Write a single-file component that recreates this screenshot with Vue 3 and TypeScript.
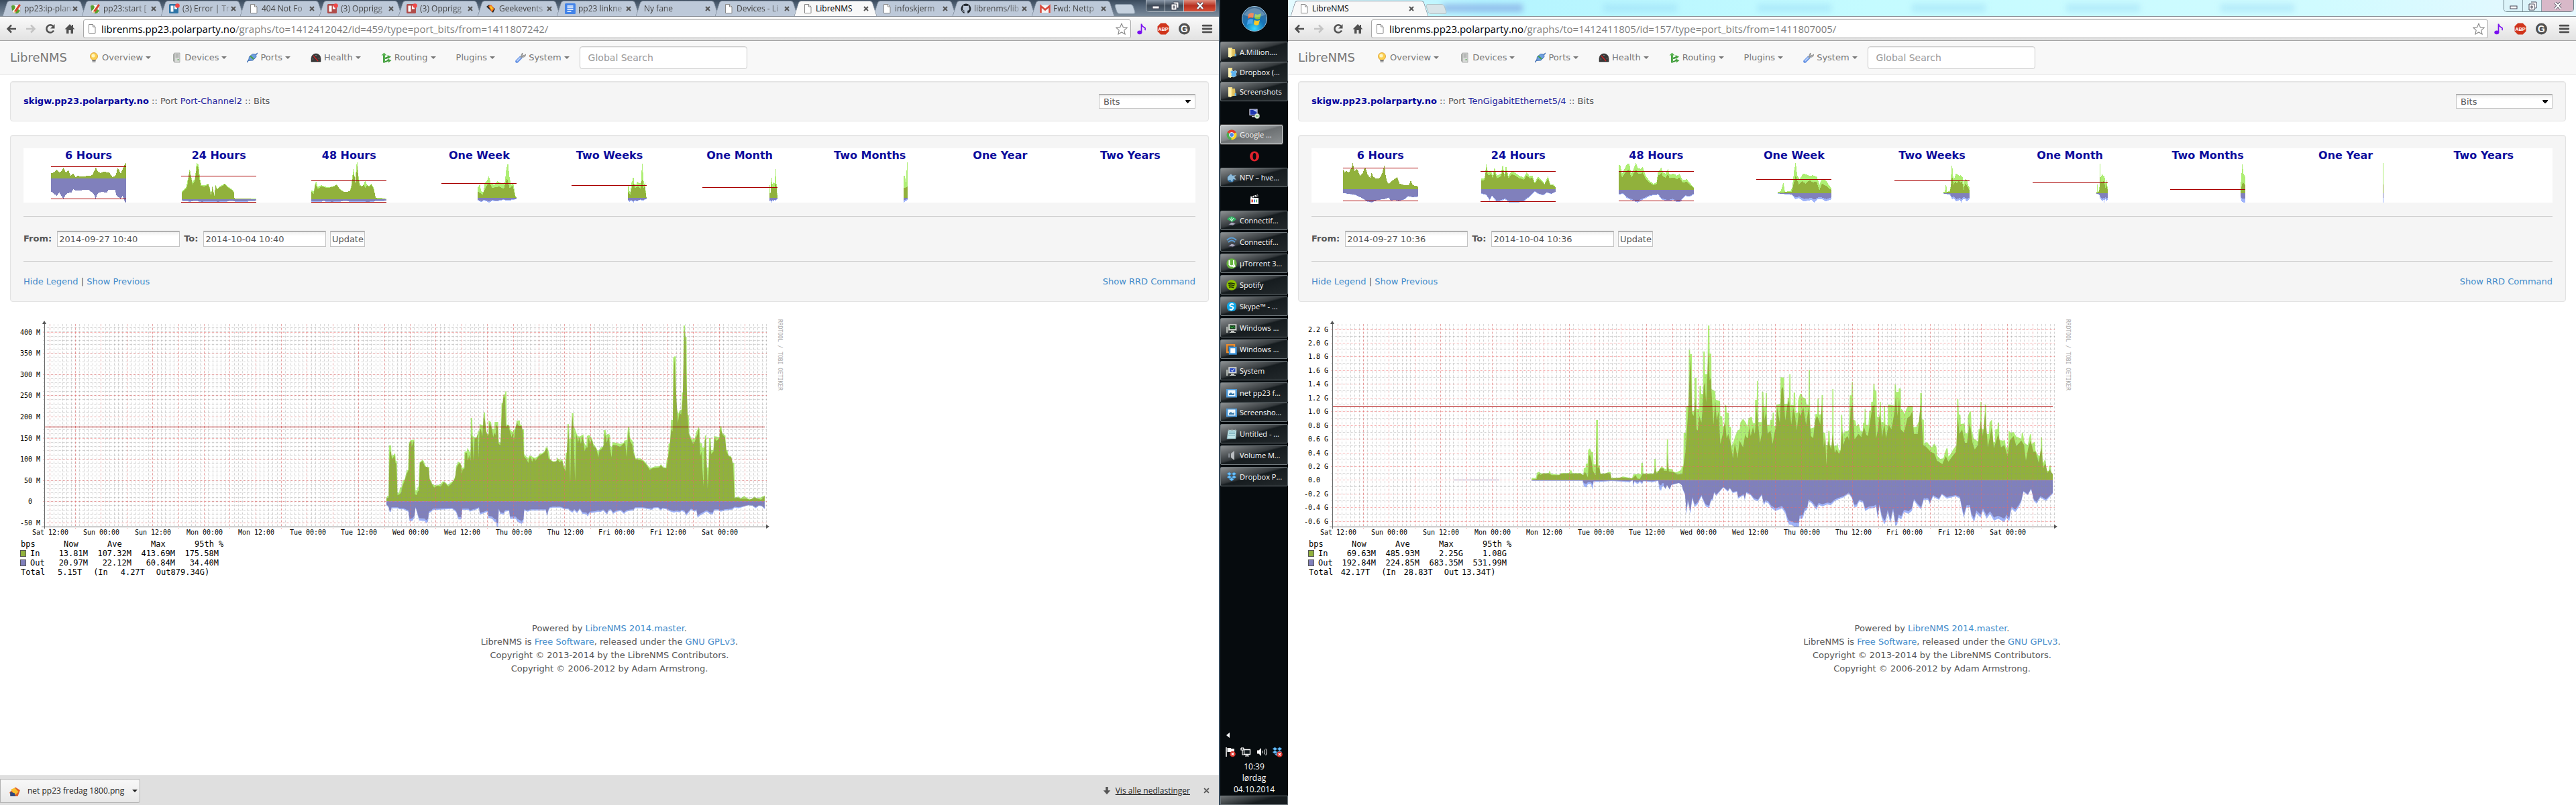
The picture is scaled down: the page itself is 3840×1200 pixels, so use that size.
<script setup lang="ts">
type Pt = number[]
interface Thumb { title: string; zero: number; lines: number[]; peak: string; avg: string; out: string; outPeak: string }
interface Trace { x: number; width: number; viewBox: string; peak: string; avg: string; out: string; outAvg: string }
interface Tick { y: number; label: string; lx: number }
interface Tab { title: string; icon: string; active?: boolean }
interface Page {
  id: string; tabs: Tab[]; glass: boolean; host: string; path: string; port: string
  from: string; to: string; thumbs: Thumb[]; traces: Trace[]; ticks: Tick[]; minor: number[]; percentile: number
  rows: { name: string; cls: string; cells: string[] }[]; total: string; totalIn: string; totalOut: string; downloads: boolean
}

const parse = (s: string): Pt[] => s.trim().split(/\s+/).map(p => p.split(',').map(Number))
const join = (pts: Pt[]): string => pts.map(p => p.join(',')).join(' ')

/* Closes a curve against the zero line. */
function area(src: string, zero: number): string {
  const pts = parse(src)
  return join([[pts[0][0], zero], ...pts, [pts[pts.length - 1][0], zero]])
}
/* Pulls a curve towards the zero line by a factor. */
function damp(src: string, zero: number, k: number): string {
  return join(parse(src).map(([x, y]) => [x, Math.round(zero + (y - zero) * k)]))
}
/* Packs a one-week curve into the last `span` units of a longer period. */
function squeeze(src: string, start: number, span: number): string {
  return join(parse(src).map(([x, y]) => [Math.round((183 - span + (x - start) * span / (183 - start)) * 10) / 10, y]))
}
function thumb(title: string, zero: number, lines: number[], peak: string, avg: string, out: string, k = 0.7): Thumb {
  if (!peak) return { title, zero, lines, peak: '', avg: '', out: '', outPeak: '' }
  return { title, zero, lines, peak: area(peak, zero), avg: area(avg, zero), outPeak: area(out, zero), out: area(damp(out, zero, k), zero) }
}

const aWeekPeak = '88,112 94,100 97,130 102,135 106,90 110,85 116,60 120,95 130,100 136,85 144,92 154,95 158,30 162,0 166,70 170,100 175,90 180,150 183,158'
const aWeekAvg = '88,130 100,145 106,120 112,100 118,95 124,115 140,108 152,118 160,70 166,115 174,105 180,155 183,158'
const aWeekOut = '88,170 98,178 104,170 116,180 124,172 135,175 150,168 165,172 183,164'
const a6 = '0,50 10,42 14,32 20,45 26,38 30,24 36,45 42,34 48,60 54,50 60,66 66,60 74,64 100,58 106,38 109,22 114,42 120,48 128,42 142,46 150,66 158,58 162,26 166,34 170,52 176,22 183,0'
const a6out = '0,130 14,150 20,135 30,162 38,140 50,134 54,120 60,125 92,124 104,140 109,163 114,138 124,132 136,136 140,122 156,124 160,150 170,162 174,150 180,176 183,180'
const aThumbs: Thumb[] = [
  thumb('6 Hours', 72, [19, 163], a6, a6, a6out, 1),
  thumb('24 Hours', 166, [61, 178],
    '2,130 12,112 17,70 21,28 24,60 28,90 34,70 37,10 39,2 43,14 46,75 50,102 60,102 66,95 70,115 73,145 76,108 81,145 84,102 88,118 96,106 106,94 112,106 122,118 128,128 130,162 183,162',
    '2,135 12,118 16,95 20,40 23,60 28,100 34,80 38,20 41,18 44,70 48,105 58,108 66,98 70,120 73,150 76,112 81,150 84,105 88,122 96,108 102,106 106,96 112,110 122,122 128,130 130,162 183,164',
    '2,172 20,176 40,174 50,180 70,176 90,180 120,174 150,178 183,172'),
  thumb('48 Hours', 166, [82, 178],
    '0,125 6,130 10,90 12,86 16,110 24,102 40,112 56,106 62,98 70,120 80,132 94,130 98,100 102,30 105,50 107,90 110,10 112,0 115,60 118,100 124,106 128,98 132,78 136,104 140,106 146,96 152,112 157,158 183,162',
    '0,130 6,140 10,98 16,120 24,108 40,115 56,108 62,100 70,122 80,132 94,130 98,110 102,55 105,60 107,90 112,18 115,75 118,105 124,108 128,100 132,115 136,100 140,110 146,98 152,120 157,160 183,164',
    '0,176 20,178 30,174 50,180 80,174 110,178 140,180 150,176 183,172'),
  thumb('One Week', 160, [94], aWeekPeak, aWeekAvg, aWeekOut),
  thumb('Two Weeks', 160, [103], squeeze(aWeekPeak, 88, 46), squeeze(aWeekAvg, 88, 46), squeeze(aWeekOut, 88, 46)),
  thumb('One Month', 160, [112], squeeze(aWeekPeak, 88, 20), squeeze(aWeekAvg, 88, 20), squeeze(aWeekOut, 88, 20)),
  thumb('Two Months', 160, [], '174,60 177,60 178,95 180,80 181,0 183,0', '174,114 180,112 183,105', '174,180 178,174 183,168', 0.5),
  thumb('One Year', 160, [], '', '', ''),
  thumb('Two Years', 160, [], '', '', '')
]

const bWeekPeak = '52,132 60,130 66,90 70,132 84,128 88,110 92,40 96,0 100,60 106,75 114,50 124,55 130,60 138,58 148,65 154,100 160,75 170,80 176,100 183,115'
const bWeekAvg = '52,135 86,132 92,90 96,60 104,100 112,85 120,95 130,80 138,90 146,85 154,125 160,95 170,105 183,125'
const bWeekOut = '52,140 86,145 96,165 104,160 116,175 124,172 134,168 142,180 150,165 160,165 170,175 183,165'
const b6 = '0,30 4,45 8,38 14,45 20,28 24,2 28,40 34,30 42,60 48,50 54,18 60,55 66,70 70,45 74,65 80,72 90,70 96,45 101,12 104,60 108,90 112,95 120,82 132,66 138,95 150,103 160,102 165,82 170,102 183,108'
const b24 = '2,72 10,70 14,6 18,45 26,40 30,60 34,22 40,60 50,50 54,8 58,50 62,15 68,60 76,38 84,45 94,60 106,68 112,45 120,62 126,58 132,90 140,64 150,80 156,95 164,62 170,98 178,100 183,112'
const b48 = '0,10 4,15 8,50 14,30 20,8 26,5 30,50 36,30 42,2 46,25 54,30 58,20 66,60 74,80 84,96 92,90 96,40 104,25 108,45 114,50 120,30 124,55 134,50 142,60 148,50 156,80 166,75 172,90 183,112'
const bThumbs: Thumb[] = [
  thumb('6 Hours', 120, [25, 172], b6, b6, '0,138 16,142 30,146 44,158 60,176 70,180 80,170 100,165 112,158 116,172 124,168 136,172 150,166 158,152 170,156 183,154', 0.97),
  thumb('24 Hours', 120, [40, 175], b24, damp(b24, 120, 0.82), '2,140 14,146 22,170 28,150 40,178 50,172 60,165 70,180 104,178 112,165 122,150 132,130 140,140 152,148 162,135 172,142 183,132', 0.92),
  thumb('48 Hours', 123, [40, 172], b48, damp(b48, 123, 0.76), '0,145 10,140 20,160 40,176 46,180 60,165 76,150 96,145 104,165 120,175 132,168 142,178 150,176 162,150 172,155 183,142', 0.88),
  thumb('One Week', 138, [76], bWeekPeak, bWeekAvg, bWeekOut),
  thumb('Two Weeks', 138, [82], squeeze(bWeekPeak, 52, 64), squeeze(bWeekAvg, 52, 64), squeeze(bWeekOut, 52, 64)),
  thumb('One Month', 138, [91], squeeze(bWeekPeak, 52, 28), squeeze(bWeekAvg, 52, 28), squeeze(bWeekOut, 52, 28)),
  thumb('Two Months', 138, [121], '171,120 174,50 176,0 178,45 181,60 183,65', '171,130 175,100 177,88 180,95 183,105', '171,150 174,175 180,180 183,178', 0.6),
  thumb('One Year', 138, [], '181,2 183,2', '181,100 183,100', '181,180 183,180', 0.5),
  thumb('Two Years', 138, [], '', '', '')
]

const aPeak = '64,845 67,838 72,838 73,612 81,612 82,657 90,655 92,648 96,650 98,682 102,682 104,822 110,824 113,800 120,798 123,768 130,766 134,745 138,724 143,722 146,600 152,588 166,586 168,740 170,813 176,812 178,798 181,796 185,688 192,680 195,675 200,682 206,700 208,708 219,708 220,760 226,768 230,783 240,790 250,790 262,784 270,772 280,778 288,788 296,780 308,770 316,748 318,705 326,685 334,690 340,712 347,710 349,640 357,638 360,622 367,640 371,640 372,488 377,490 379,570 386,575 396,577 397,550 403,548 404,516 411,520 417,522 419,465 424,465 425,525 430,560 436,560 437,500 446,508 449,536 458,538 459,507 472,507 474,598 482,600 484,424 490,422 491,384 497,384 498,370 502,370 503,519 512,520 516,540 524,552 532,540 538,520 539,500 551,500 552,518 558,520 560,540 566,541 567,650 575,662 582,668 586,657 594,660 600,665 606,668 618,660 624,648 632,648 642,636 646,620 652,620 658,645 662,675 674,684 684,682 688,665 694,675 706,675 712,705 716,710 719,645 724,644 725,516 730,517 732,582 740,582 741,468 747,468 748,525 756,550 762,570 770,572 783,562 786,600 794,615 796,570 804,565 812,575 820,605 828,618 836,638 842,630 846,620 856,618 858,543 865,544 867,565 876,560 880,565 882,615 888,618 890,598 904,600 918,605 930,600 932,590 942,588 946,530 951,530 954,580 962,590 966,600 968,640 974,670 992,670 1004,680 1012,690 1024,710 1032,712 1044,706 1062,705 1066,695 1074,708 1084,712 1088,668 1092,665 1094,605 1100,600 1103,498 1110,498 1111,219 1116,214 1121,214 1122,440 1130,470 1134,455 1142,452 1143,376 1148,374 1149,76 1154,76 1155,126 1160,126 1162,474 1168,476 1170,560 1180,585 1190,580 1196,550 1204,530 1208,540 1209,600 1216,602 1218,622 1226,620 1227,568 1232,568 1233,710 1240,710 1242,578 1248,580 1250,632 1258,632 1260,570 1270,572 1280,575 1282,526 1287,526 1290,555 1302,568 1303,632 1310,634 1312,656 1322,660 1326,688 1334,690 1337,845 1350,840 1356,850 1370,838 1384,850 1398,852 1408,840 1414,848 1428,846 1434,842 1445,836'
const aAvg = '64,848 72,845 74,710 76,640 80,640 84,672 88,668 93,655 97,690 100,690 104,835 112,830 118,822 122,795 130,770 138,740 145,720 147,605 155,592 156,618 164,590 168,830 174,835 179,815 183,815 186,690 196,682 204,706 218,712 222,765 232,788 238,800 250,792 262,796 274,775 290,796 302,782 314,760 320,712 330,690 336,700 339,742 342,720 349,715 352,645 358,645 361,680 366,655 371,680 374,560 378,580 382,680 386,580 392,580 397,560 400,670 404,540 409,540 414,572 419,480 424,500 428,545 433,570 438,560 440,510 444,520 450,545 454,575 458,555 462,565 466,520 470,530 474,605 480,612 486,440 492,390 497,400 500,530 508,520 514,545 521,575 525,552 529,590 534,545 540,510 547,525 556,525 562,545 566,660 576,675 582,690 588,660 596,685 602,668 608,680 620,660 640,645 650,622 656,670 670,685 684,684 690,675 696,688 706,680 712,712 718,728 722,650 728,540 731,600 735,780 739,540 743,480 746,520 753,775 757,560 764,600 768,575 774,605 780,570 784,600 788,638 792,620 798,622 802,575 808,605 814,580 820,615 830,625 838,665 842,635 850,628 858,610 862,555 868,600 876,570 880,620 886,665 890,610 904,612 918,618 930,604 936,600 941,665 948,540 954,595 962,610 966,645 974,675 1000,680 1014,700 1026,722 1034,715 1060,710 1066,700 1074,712 1086,715 1092,670 1098,620 1104,540 1109,550 1113,290 1116,220 1120,340 1128,512 1134,465 1140,475 1146,400 1150,190 1153,90 1157,150 1160,340 1164,480 1168,560 1176,585 1184,606 1190,595 1200,560 1205,535 1210,660 1214,640 1217,700 1222,795 1226,590 1230,580 1237,805 1241,720 1245,590 1250,650 1258,640 1262,580 1270,592 1280,580 1284,535 1292,565 1300,575 1306,640 1314,660 1324,665 1330,700 1335,848 1345,845 1360,850 1380,850 1390,855 1408,845 1420,850 1432,855 1445,838'
const aOut = '64,878 72,890 75,908 81,908 82,893 105,893 112,898 126,898 138,905 144,908 148,950 158,950 166,935 170,892 174,905 180,935 184,948 204,950 209,960 216,950 219,915 228,908 234,900 250,900 304,896 318,910 327,943 337,943 340,900 364,900 368,908 380,903 390,900 402,893 405,922 420,915 434,908 436,937 450,940 458,953 465,955 467,975 472,975 474,900 480,918 492,922 496,908 512,905 515,940 536,940 542,952 557,963 564,955 567,903 580,908 590,903 646,903 650,930 656,903 660,893 670,890 700,890 714,898 728,898 734,905 743,913 750,902 760,915 770,898 780,918 794,920 799,930 806,915 826,912 836,908 846,910 856,903 869,922 876,905 884,903 892,918 904,908 920,905 931,918 940,908 950,905 966,903 972,893 1000,893 1034,900 1040,893 1056,892 1066,903 1072,895 1086,898 1096,905 1114,913 1124,908 1134,912 1142,905 1152,910 1159,926 1166,915 1176,900 1190,908 1196,903 1200,935 1210,925 1218,920 1230,910 1234,908 1246,920 1256,920 1260,903 1276,903 1285,908 1300,903 1326,900 1336,890 1350,893 1364,888 1384,880 1400,882 1412,893 1424,882 1436,885 1445,898'

const bPeakEarly = '949,757 966,759 969,735 978,729 985,737 1015,735 1019,723 1024,739 1060,743 1064,736 1094,735 1102,720 1108,736 1140,736 1150,745 1152,714 1159,712 1160,693 1167,693 1169,633 1176,625 1181,640 1188,643 1190,697 1199,697 1200,498 1207,498 1209,700 1214,702 1216,738 1236,737 1250,730 1257,732 1258,757 1290,757 1304,751 1340,759 1345,741 1358,741 1364,738 1374,742 1376,689 1382,690 1384,737 1426,737 1427,672 1432,672 1434,730 1444,725 1454,706 1463,712'
const bAvgEarly = '949,764 968,762 972,745 980,738 984,745 990,738 1018,738 1026,745 1055,745 1062,738 1140,738 1150,745 1156,730 1162,740 1168,755 1172,660 1176,655 1182,680 1188,725 1193,738 1198,745 1203,540 1206,715 1211,706 1217,740 1250,735 1256,740 1260,760 1300,755 1340,760 1348,752 1354,745 1360,760 1370,762 1380,740 1424,740 1430,710 1436,738 1450,715 1463,715'
const bOutEarly = '949,770 1148,770 1152,795 1162,800 1168,785 1180,785 1186,810 1190,775 1222,775 1260,771 1310,775 1330,777 1342,768 1345,800 1349,775 1362,785 1370,775 1379,785 1384,772 1420,777 1442,770 1445,805 1453,815 1457,795 1463,795'
const bPeak = '0,715 10,718 12,585 16,585 17,717 30,718 36,730 46,732 64,722 66,706 72,706 73,555 81,555 82,440 91,436 92,183 96,183 97,204 103,204 104,460 112,455 113,309 120,309 121,450 130,450 131,345 136,345 137,382 144,382 145,192 150,192 151,294 160,294 162,76 167,76 168,201 174,201 175,360 188,370 190,407 206,414 207,480 214,482 216,528 222,526 223,432 229,434 230,465 238,466 240,528 246,530 247,615 254,600 262,568 270,545 278,540 280,510 290,492 300,510 306,528 310,490 322,484 326,514 333,512 334,408 340,408 341,323 345,323 346,508 358,508 359,371 364,373 366,440 372,440 373,378 377,378 378,520 388,520 390,497 397,497 398,465 402,465 404,525 410,525 411,430 426,426 427,306 440,309 441,426 452,425 453,400 458,398 459,294 463,294 464,432 474,432 475,376 480,376 482,465 490,465 491,411 498,382 504,382 508,397 518,402 522,430 529,430 530,274 534,274 535,537 552,530 554,472 561,472 562,402 566,402 568,474 576,472 577,387 581,387 583,555 590,555 592,609 600,610 601,547 606,547 608,612 615,612 616,360 620,360 621,615 632,612 634,598 640,635 646,632 648,474 652,475 654,560 662,550 676,545 680,388 686,388 687,330 691,330 693,497 700,500 704,525 712,515 720,550 727,548 728,510 733,510 734,448 737,448 740,520 748,520 751,458 757,455 758,418 764,416 766,337 770,337 771,366 777,366 779,484 788,484 789,417 793,417 795,508 803,508 804,435 808,435 810,520 818,520 819,429 843,434 844,339 848,339 849,373 858,372 859,357 866,357 867,448 874,455 880,472 886,450 892,437 910,437 912,530 924,528 930,508 936,508 937,378 943,378 944,495 950,497 952,603 962,596 970,610 980,620 988,603 996,618 1000,660 1010,672 1022,670 1026,648 1033,625 1037,625 1040,662 1048,650 1056,632 1066,616 1070,614 1072,405 1076,405 1078,474 1084,475 1085,516 1099,514 1102,558 1110,558 1111,484 1118,460 1122,460 1125,540 1132,580 1148,595 1150,540 1156,540 1157,417 1161,417 1162,540 1172,540 1173,429 1177,429 1179,560 1188,560 1190,510 1199,496 1201,540 1204,598 1210,598 1211,541 1219,540 1220,510 1225,510 1226,588 1240,590 1246,588 1250,620 1258,620 1260,546 1268,555 1278,552 1288,572 1306,582 1308,556 1312,556 1318,600 1326,608 1330,609 1338,562 1342,562 1344,605 1356,595 1358,634 1366,655 1376,660 1378,576 1382,576 1384,692 1394,672 1398,725 1406,726 1408,702 1414,702 1416,735 1421,738'
const bAvg = '0,725 12,725 15,640 19,728 35,730 50,742 68,740 75,680 80,640 84,560 90,450 95,290 99,220 104,470 110,480 116,400 120,540 125,545 130,480 138,510 143,440 146,350 150,330 155,420 159,330 163,190 168,320 172,310 178,440 182,520 188,410 194,500 200,460 207,605 216,560 224,500 230,580 236,560 244,600 253,670 260,600 270,670 277,590 290,620 298,560 302,575 308,580 312,530 318,570 326,530 333,560 340,440 345,520 352,600 358,560 362,430 368,500 374,460 380,560 390,545 398,605 404,560 410,530 414,440 424,510 430,360 436,350 444,500 452,430 458,410 466,520 473,440 480,480 486,545 494,460 500,480 510,440 520,520 530,440 538,570 546,580 553,500 560,480 568,500 572,520 578,430 585,620 590,560 594,700 600,590 612,630 617,560 625,645 632,630 640,650 646,635 652,540 656,610 664,580 672,570 677,590 683,450 690,430 697,585 712,560 722,575 732,530 740,565 746,570 756,490 762,440 770,430 776,580 783,540 790,460 798,575 806,510 812,580 822,520 832,540 842,470 848,390 854,480 860,400 866,540 878,555 890,490 900,480 908,460 914,560 928,560 938,430 948,610 960,620 975,640 990,650 998,680 1018,695 1030,660 1040,685 1058,655 1068,640 1074,480 1080,560 1090,540 1100,600 1108,600 1118,510 1128,600 1136,630 1148,610 1158,500 1166,570 1174,460 1184,620 1198,530 1206,625 1222,560 1232,620 1244,610 1256,660 1264,590 1278,570 1288,615 1306,590 1316,610 1323,680 1332,620 1340,590 1350,640 1358,640 1370,690 1376,640 1380,620 1386,715 1394,690 1402,735 1410,720 1421,742'
const bOut = '0,795 7,808 12,790 22,810 28,790 40,785 56,780 66,790 70,810 78,833 84,922 88,860 98,918 104,850 114,887 124,875 130,860 138,840 148,870 154,885 166,892 172,862 180,855 184,825 192,838 204,820 218,800 234,818 242,805 252,825 268,820 272,850 292,835 296,857 302,825 318,835 330,855 344,862 358,835 366,880 372,865 382,870 392,890 408,905 432,893 444,915 452,950 458,965 470,968 476,975 494,975 496,940 508,938 516,905 524,900 530,860 542,872 558,900 566,878 580,884 598,876 610,880 624,862 640,852 656,845 676,828 688,850 696,887 704,887 714,862 728,868 736,905 750,895 768,892 776,885 781,938 788,885 796,935 806,965 812,950 818,910 828,960 838,905 846,970 852,970 858,935 868,942 878,910 894,918 906,905 914,858 928,882 940,898 950,855 966,855 972,875 984,840 996,850 1006,855 1016,832 1034,850 1066,840 1082,850 1088,890 1096,935 1106,890 1118,888 1124,930 1134,953 1142,915 1158,935 1166,905 1180,940 1192,918 1206,948 1222,940 1244,955 1252,935 1262,952 1270,895 1284,910 1296,890 1306,865 1314,820 1330,835 1342,808 1352,860 1362,872 1376,845 1396,860 1412,840 1421,828'

function trace(x: number, width: number, viewBox: string, zero: number, peak: string, avg: string, out: string, k: number): Trace {
  return { x, width, viewBox, peak: area(peak, zero), avg: area(avg, zero), out: area(out, zero), outAvg: area(damp(out, zero, k), zero) }
}
const steps = (from: number, to: number, step: number): number[] => {
  const list: number[] = []
  for (let v = from; v <= to; v += step) list.push(Math.round(v))
  return list
}
const aTicks: Tick[] = ['400 M', '350 M', '300 M', '250 M', '200 M', '150 M', '100 M', '50 M', '0', '-50 M']
  .map((label, i) => ({ y: Math.round(494.5 + i * 31.6), label, lx: label === '0' ? 48 : 60 }))
const bTicks: Tick[] = ['2.2 G', '2.0 G', '1.8 G', '1.6 G', '1.4 G', '1.2 G', '1.0 G', '0.8 G', '0.6 G', '0.4 G', '0.2 G', '0.0', '-0.2 G', '-0.4 G', '-0.6 G']
  .map((label, i) => ({ y: Math.round(490.5 + i * 20.45), label, lx: label === '0.0' ? 48 : 60 }))

const hours = steps(73.5, 1144, 6.4)
const sixHours = steps(73.5, 1144, 38.4)
const dates = ['Sat 12:00', 'Sun 00:00', 'Sun 12:00', 'Mon 00:00', 'Mon 12:00', 'Tue 00:00', 'Tue 12:00', 'Wed 00:00', 'Wed 12:00', 'Thu 00:00', 'Thu 12:00', 'Fri 00:00', 'Fri 12:00', 'Sat 00:00']
  .map((label, i) => ({ label, x: Math.round(74.5 + i * 76.8) }))

const pages: Page[] = [
  {
    id: 'a', glass: false, host: 'librenms.pp23.polarparty.no', path: '/graphs/to=1412412042/id=459/type=port_bits/from=1411807242/', port: 'Port-Channel2',
    tabs: [
      { title: 'pp23:ip-plan', icon: 'doku' }, { title: 'pp23:start [', icon: 'doku' }, { title: '(3) Error | Tr', icon: 'trelloBlue' }, { title: '404 Not Fo', icon: 'page' },
      { title: '(3) Opprigg', icon: 'trelloRed' }, { title: '(3) Opprigg', icon: 'trelloRed' }, { title: 'Geekevents', icon: 'geek' }, { title: 'pp23 linkne', icon: 'doc' },
      { title: 'Ny fane', icon: '' }, { title: 'Devices - Li', icon: 'page' }, { title: 'LibreNMS', icon: 'page', active: true }, { title: 'infoskjerm', icon: 'page' },
      { title: 'librenms/lib', icon: 'github' }, { title: 'Fwd: Nettp', icon: 'gmail' }
    ],
    from: '2014-09-27 10:40', to: '2014-10-04 10:40', thumbs: aThumbs,
    traces: [trace(550, 640, '0 0 1568 1260', 862, aPeak, aAvg, aOut, 0.87)],
    ticks: aTicks, minor: steps(488, 784, 6.32), percentile: 636,
    rows: [
      { name: 'In', cls: 'in', cells: ['13.81M', '107.32M', '413.69M', '175.58M'] },
      { name: 'Out', cls: 'out', cells: ['20.97M', '22.12M', '60.84M', '34.40M'] }
    ],
    total: '5.15T', totalIn: '4.27T', totalOut: '879.34G)', downloads: true
  },
  {
    id: 'b', glass: true, host: 'librenms.pp23.polarparty.no', path: '/graphs/to=1412411805/id=157/type=port_bits/from=1411807005/', port: 'TenGigabitEthernet5/4',
    tabs: [{ title: 'LibreNMS', icon: 'page', active: true }],
    from: '2014-09-27 10:36', to: '2014-10-04 10:36', thumbs: bThumbs,
    traces: [
      trace(0, 560, '0 0 1463 1260', 767, bPeakEarly, bAvgEarly, bOutEarly, 0.5),
      trace(560, 640, '0 0 1568 1260', 767, bPeak, bAvg, bOut, 0.92)
    ],
    ticks: bTicks, minor: steps(500.5, 780, 20.45), percentile: 605,
    rows: [
      { name: 'In', cls: 'in', cells: ['69.63M', '485.93M', '2.25G', '1.08G'] },
      { name: 'Out', cls: 'out', cells: ['192.84M', '224.85M', '683.35M', '531.99M'] }
    ],
    total: '42.17T', totalIn: '28.83T', totalOut: '13.34T)', downloads: false
  }
]

const menu = [
  { label: 'Overview', icon: 'bulb' }, { label: 'Devices', icon: 'server' }, { label: 'Ports', icon: 'plug' }, { label: 'Health', icon: 'gauge' },
  { label: 'Routing', icon: 'route' }, { label: 'Plugins', icon: '' }, { label: 'System', icon: 'wrench' }
]

interface Task { label?: string; icon: string; cls?: string }
const tasks: Task[] = [
  { label: 'A.Million....', icon: 'folder', cls: 'joined' }, { label: 'Dropbox (...', icon: 'folderBox', cls: 'joined' }, { label: 'Screenshots', icon: 'folder' },
  { icon: 'remote' }, { label: 'Google ...', icon: 'chrome', cls: 'current' }, { icon: 'opera' }, { label: 'NFV – hve...', icon: 'globe' }, { icon: 'clapper' },
  { label: 'Connectif...', icon: 'wifiGreen' }, { label: 'Connectif...', icon: 'wifiBlue' }, { label: 'µTorrent 3...', icon: 'utorrent' }, { label: 'Spotify', icon: 'spotify' },
  { label: 'Skype™ - ...', icon: 'skype' }, { label: 'Windows ...', icon: 'monitorGreen' }, { label: 'Windows ...', icon: 'vmware' }, { label: 'System', icon: 'monitorBlue' },
  { label: 'net pp23 f...', icon: 'photo', cls: 'joined' }, { label: 'Screensho...', icon: 'photo' }, { label: 'Untitled - ...', icon: 'notepad' },
  { label: 'Volume M...', icon: 'speaker' }, { label: 'Dropbox P...', icon: 'dropbox' }
]

const box = '<path d="M4.5 1 8 3.4 4.6 5.8 1 3.3zM11.500 1 15 3.3 11.400 5.800 8 3.400zM1 8.200 4.600 5.800 8 8.200 4.500 10.600zM15 8.200 11.400 5.800 8 8.200 11.500 10.600zM8 9.200l3.400 2.300L8 14l-3.500-2.500z" fill="#6cc0f8" stroke="#2b7fc4" stroke-width=".5"/>'
const monitor = (c: string) => `<rect x="3" y="2" width="12.500" height="9.500" fill="#d8dcd8" stroke="#777" stroke-width=".7"/><rect x="5" y="4" width="8.500" height="5.500" fill="${c}"/><path d="M7 12h5v2H7zM5 14h9v1H5z" fill="#c8ccc8"/><rect x="0" y="6" width="2.500" height="9" fill="#aeb4ae"/>`
const icons: Record<string, string> = {
  page: '<path d="M3.500 1.500h6l3.500 3.500v9.500H3.500z" fill="#fff" stroke="#888"/><path d="M9.500 1.500V5H13" fill="none" stroke="#888"/>',
  doku: '<path d="M2 2h9l3 4v8H3z" fill="#fff" stroke="#aaa" stroke-width=".6"/><path d="M1 4q4-3 6 1-1 5-5 6zM7 10q4-3 7 1-3 5-7 4z" fill="#58a030"/><path d="M5 11.500 12.500 1l2.500 1.800L8 13z" fill="#d8452f"/><path d="M5 11.500L4 14.500 8 13z" fill="#f0d090"/>',
  trelloBlue: '<rect x="0" y="1" width="14" height="14" rx="1.500" fill="#2e74a6"/><rect x="2.500" y="3.500" width="4" height="9" fill="#fff"/><rect x="8" y="3.500" width="4" height="5" fill="#fff"/><circle cx="12.500" cy="3.500" r="3.300" fill="#f04848"/>',
  trelloRed: '<rect x="0" y="1" width="14" height="14" rx="1.500" fill="#b04c4a"/><rect x="2.500" y="3.500" width="4" height="9" fill="#fff"/><rect x="8" y="3.500" width="4" height="5" fill="#fff"/><circle cx="12.500" cy="3.500" r="3.300" fill="#f04848"/>',
  geek: '<path d="M1 5l4-3 9 6-3 6z" fill="#222"/><path d="M4 4l4-2 5 6-4 5z" fill="#f07020"/><path d="M6 5l2-1 3 4-2 2z" fill="#fbd020"/>',
  doc: '<rect x="0" y="0" width="16" height="16" rx="1.500" fill="#4484e8"/><path d="M3.500 4h9M3.500 6.700h9M3.500 9.400h9M3.500 12h6" stroke="#fff" stroke-width="1.300"/>',
  github: '<path d="M8 .5a7.500 7.500 0 0 0-2.400 14.600v-2.200c-2 .4-2.600-.9-2.800-1.400-.2-.4-.6-.9-1-1.100 1-.3 1.500.4 1.900 1 .6 1 1.500.9 2 .7.100-.5.300-.9.500-1.100C4.500 10.800 3 10 3 7.400c0-.8.300-1.500.8-2-.2-.7-.2-1.400.1-2.100.8 0 1.500.4 2.100.8a7.600 7.600 0 0 1 4 0c.6-.4 1.300-.8 2.100-.8.300.700.300 1.400.1 2.100.5.500.8 1.200.8 2 0 2.600-1.500 3.400-3.200 3.600.3.300.5.800.5 1.600v2.500A7.500 7.500 0 0 0 8 .5z" fill="#20262c"/>',
  gmail: '<rect x="0" y="2.500" width="16" height="11.500" fill="#f4f4f4"/><path d="M1.500 14V4L8 9.500 14.500 4v10" fill="none" stroke="#d8483c" stroke-width="2.600"/>',
  bulb: '<circle cx="8" cy="6" r="5.500" fill="#fcd050" stroke="#d89830" stroke-width=".8"/><circle cx="7" cy="5" r="2.600" fill="#fff6c0"/><path d="M5.500 11h5v4h-5z" fill="#a8a8a8"/><path d="M5.500 12.500h5" stroke="#666"/>',
  server: '<path d="M5 1h8v14H5z" fill="#d8dad8" stroke="#999" stroke-width=".7"/><path d="M3 3l2-2v14l-2-2z" fill="#a4a8a4"/><path d="M6.500 3h5M6.500 5h5M6.500 7h5" stroke="#888" stroke-width=".8"/><circle cx="10.500" cy="11" r="1" fill="#4a4"/>',
  plug: '<path d="M0 15l3-4M13 4l3-3" stroke="#4a78b8" stroke-width="1.600"/><path d="M2.500 12.500l1-6 5-4 5 .5.500 4-5 5z" fill="#6c9fe0" stroke="#3864a8" stroke-width=".8"/><path d="M5 5.500l5 4.500" stroke="#48a048" stroke-width="2.200"/>',
  gauge: '<path d="M1 14V9a7 7 0 0 1 14 0v5z" fill="#383838" stroke="#222" stroke-width=".6"/><path d="M4 5l7 8" stroke="#d02020" stroke-width="1.300"/><path d="M3 10h1M12 9h1M8 4v1" stroke="#ccc"/>',
  route: '<path d="M4.500 15.500V4" stroke="#3c9838" stroke-width="3"/><path d="M4.500 4v11" stroke="#8cdc80" stroke-width="1"/><path d="M0.500 4.500L4.500 .5l4 4z" fill="#58b450"/><path d="M5 14q4 0 6-3M5 9q3 0 6-2" fill="none" stroke="#3c9838" stroke-width="2.200"/><path d="M9.500 4L15 6.500 10.500 10zM10 9.500l5.500 2.500-4.500 3.500z" fill="#48a440"/>',
  wrench: '<path d="M2.500 13.500l6-6" stroke="#6894e4" stroke-width="4.600" stroke-linecap="round"/><path d="M2.500 13l6-6" stroke="#b8d0fa" stroke-width="1.800"/><path d="M8 8l3-3" stroke="#999" stroke-width="2.500"/><path d="M10 6a3.200 3.200 0 0 1 1-5v3l2 .8L15.500 3A3.500 3.500 0 0 1 11 7z" fill="#bbb" stroke="#777" stroke-width=".7"/>',
  folder: '<path d="M3 1h6v14H3z" fill="#f4e08c"/><path d="M3 1l4 2v13l-4-1z" fill="#fbf0b0"/><path d="M9 3h4l1 11H9z" fill="#e0c05c"/><path d="M12.500 10h2.500v4h-2.500z" fill="#58a8e0"/>',
  folderBox: '<path d="M3 1h6v14H3z" fill="#f4e08c"/><path d="M3 1l4 2v13l-4-1z" fill="#fbf0b0"/><path d="M6 7l3-2 2 2 2-2 3 2-2 3 1 3-4 2-4-2 1-3z" fill="#5cb4f0" stroke="#cfeafe" stroke-width=".6"/>',
  remote: '<rect x="1" y="2" width="11" height="8.500" fill="#2038b0" stroke="#dde" stroke-width="1.200"/><path d="M6 3h5v3z" fill="#b8d0f8"/><path d="M4 12h6v1.500H4z" fill="#ccd"/><circle cx="12" cy="12" r="3.700" fill="#e8f4e0" stroke="#999" stroke-width=".5"/><path d="M10.200 10.500l1.500 1.500-1.500 1.500M14 10.500L12.500 12l1.500 1.500" fill="none" stroke="#289828"/>',
  chrome: '<circle cx="8" cy="8" r="7.500" fill="#4caf50"/><path d="M8 8L1.500 4.200A7.500 7.500 0 0 1 14.600 4.500z" fill="#e33b2e"/><path d="M8 8l6.600-3.500A7.500 7.500 0 0 1 7.500 15.500z" fill="#fcd320"/><circle cx="8" cy="8" r="3.500" fill="#4a86e8" stroke="#fff"/>',
  opera: '<ellipse cx="8" cy="8" rx="7" ry="7.500" fill="#e0222c"/><ellipse cx="8" cy="8" rx="2.500" ry="5" fill="#080c10"/>',
  globe: '<circle cx="7" cy="9" r="5.500" fill="#2c6ea4"/><path d="M2 7l5-5 2 3 6-1-3 3 3 4-5-1-1 5-3-4-4 1z" fill="#a8d0e8" opacity=".8"/>',
  clapper: '<path d="M2 4l11-3 .5 2.500-11 3z" fill="#fff"/><path d="M4 3.500l1.500 2M7.500 2.500L9 4.500M11 1.500l1.500 2" stroke="#222" stroke-width="1.500"/><rect x="2" y="6" width="12" height="9" fill="#fff"/><path d="M3.500 8.500h2.500v4H3.500z" fill="#e04838"/><path d="M7 8.500h2v4H7z" fill="#3c80d8"/><path d="M10.500 8.500h1.500v4h-1.500z" fill="#40a848"/>',
  wifiGreen: '<path d="M1 6q7-9 14 0l-6 4z" fill="#30b060"/><path d="M5 4l3 5M8 3v6M11 4L8 9" stroke="#d8ffe0"/><path d="M3 14l5-4 6 2-4 3z" fill="#aab" stroke="#445"/>',
  wifiBlue: '<path d="M1 5q7-7 14 0M3 8q5-5 10 0" fill="none" stroke="#5a9cd4" stroke-width="2"/><path d="M3 14l5-4 6 2-4 3z" fill="#aab" stroke="#445"/>',
  utorrent: '<circle cx="8" cy="8" r="7.700" fill="#68b440"/><path d="M4.500 3v6q1 3.500 5 2l1 1.500 2-.8-1.500-3V3M4.500 4v6" fill="none" stroke="#fff" stroke-width="2"/>',
  spotify: '<circle cx="8" cy="8" r="7.700" fill="#8cc000"/><path d="M3 5.500q5-1.500 10 1M3.500 8.200q4.500-1.200 8.500 1M4 11q4-1 7 .8" fill="none" stroke="#18240a" stroke-width="1.500"/>',
  skype: '<rect x="1" y="1" width="14" height="14" rx="6" fill="#10a8e8"/><path d="M11 5Q8 3 6 5t2 3 1.500 3.500-4.500 0" fill="none" stroke="#fff" stroke-width="1.900"/>',
  monitorGreen: monitor('#103818') + '<path d="M5 7l2-1 1.500 2L10 6l3 1" fill="none" stroke="#40e050"/>',
  monitorBlue: monitor('#2848c0') + '<path d="M7 6.500l2 2 3-4" fill="none" stroke="#fff"/>',
  vmware: '<rect x="1" y="1" width="11" height="11" fill="none" stroke="#f08c28" stroke-width="2.400"/><rect x="5" y="5" width="9.500" height="9.500" fill="#fff" stroke="#3c94dc" stroke-width="2.400"/>',
  photo: '<rect x="0" y="2" width="16" height="12.500" fill="#4c98d8"/><rect x="2.500" y="3.500" width="11" height="9" fill="#f0f8fc"/><path d="M4 11V9l3-2 2 2 3-1v3z" fill="#3878a8"/>',
  notepad: '<path d="M3 2h12l-1 13H1z" fill="#c0e4e8" stroke="#78a8b0" stroke-width=".6"/><path d="M4 5h9M4 7.500h9M3 10h10" stroke="#68a0b0" stroke-width=".8"/><path d="M3 1.500h12" stroke="#888" stroke-dasharray="1 1" stroke-width="2"/>',
  speaker: '<path d="M7 5l5-4v14l-5-4z" fill="#b8bcc0"/><path d="M3 5h3v6H3z" fill="#80868c"/>',
  dropbox: box,
  flag: '<path d="M2 1v14" stroke="#fff" stroke-width="1.500"/><path d="M3.500 2h5l1 1H14v6H9L8 8H3.500z" fill="#fff"/><circle cx="11.500" cy="11" r="4.300" fill="#d83028"/><path d="M9.800 9.300l3.400 3.400M13.200 9.300l-3.400 3.400" stroke="#fff" stroke-width="1.400"/>',
  network: '<path d="M5.500 4.500h9v7h-9z" fill="#10181c" stroke="#fff" stroke-width="1.300"/><path d="M7 14h6M10 12v2M1 2v3h4V2M2 1v2M4 1v2M3 5v7h3" fill="none" stroke="#fff" stroke-width="1.200"/>',
  volume: '<path d="M1 5.500h2.500L7 2v12l-3.500-3.500H1z" fill="#fff"/><path d="M9 6q1 2 0 4M11.500 4.500q2 3.500 0 7M13.700 3q3 5 0 10" fill="none" stroke="#ddd" stroke-width="1.100"/>',
  dropErr: box + '<circle cx="11.500" cy="11.500" r="4.300" fill="#d83028"/><path d="M9.800 9.800l3.400 3.400M13.200 9.800l-3.400 3.400" stroke="#fff" stroke-width="1.400"/>',
  back: '<path d="M15 8H3M8 2.500L2.500 8 8 13.500" fill="none" stroke="#505050" stroke-width="2.500"/>',
  forward: '<path d="M1 8h12M8 2.500L13.500 8 8 13.500" fill="none" stroke="#c4c4c4" stroke-width="2.500"/>',
  reload: '<path d="M13 10.500A5.600 5.600 0 1 1 12 4" fill="none" stroke="#505050" stroke-width="2.500"/><path d="M14.500 1v6.500H8z" fill="#505050"/>',
  home: '<path d="M8 1L0.500 8.500H3V15h3.500v-5h3v5H13V8.500h2.500L13 6V2h-2v2z" fill="#505050"/>',
  star: '<path d="M8 1l2.100 4.900 5.200.5-3.900 3.500 1.100 5.200L8 12.400l-4.500 2.700 1.100-5.200L.7 6.400l5.200-.5z" fill="#fff" stroke="#888"/>',
  note: '<ellipse cx="5.500" cy="13" rx="3.300" ry="2.700" fill="#7a10f0"/><path d="M8 13V1q1 4 5 5.500 1 1.500 0 3.500" fill="none" stroke="#7a10f0" stroke-width="1.600"/>',
  abp: '<path d="M5 0h7l4.500 4.500v7L12 16H5L.5 11.500v-7z" fill="#d0351c"/><text x="8.500" y="11" text-anchor="middle" font-family="Liberation Sans, sans-serif" font-weight="700" font-size="7" fill="#fff">ABP</text>',
  ghost: '<circle cx="8" cy="8" r="8" fill="#505050"/><text x="8" y="12.500" text-anchor="middle" font-family="Liberation Sans, sans-serif" font-weight="700" font-size="13" fill="#fff">G</text>',
  bars: '<path d="M2 3.500h12M2 8h12M2 12.500h12" stroke="#505050" stroke-width="2.600" stroke-linecap="round"/>',
  download: '<path d="M6 1h4v6h4l-6 7-6-7h4z" fill="#555"/>',
  picture: '<path d="M1 10L9 3l6 4-3 8H3z" fill="#e06028"/><path d="M3 6l5-2 5 5-5 5z" fill="#f8c030"/><path d="M2 9l6 2 1 4H2z" fill="#304880"/>'
}
</script>

<template>
  <div class="desktop">
    <template v-for="(page, n) in pages" :key="page.id">
      <nav v-if="n === 1" class="taskbar" aria-label="Taskbar">
        <button class="start" aria-label="Start">
          <svg viewBox="0 0 40 40" width="40" height="40">
            <defs>
              <radialGradient id="orb" cx=".5" cy=".9" r=".9"><stop offset="0" stop-color="#38d8ff" /><stop offset=".45" stop-color="#1674b8" /><stop offset="1" stop-color="#4a6c8c" /></radialGradient>
            </defs>
            <circle cx="20" cy="20" r="18.500" fill="url(#orb)" stroke="#9cc8e4" />
            <path d="M11 13q4-3 8-1l-1 7q-4-2-8 1z" fill="#ee6a30" /><path d="M21 13q4 2 9-1l-2 8q-4 2-8-1z" fill="#8cc63c" />
            <path d="M10 22q4-3 8-1l-1 7q-4-2-8 1z" fill="#4aa4ec" /><path d="M20 22q4 2 8 0l-2 7q-4 2-7-1z" fill="#fcc828" />
            <path d="M4 14Q20 -6 36 14 20 22 4 14z" fill="#fff" opacity=".22" />
          </svg>
        </button>
        <ul class="tasks">
          <li v-for="(t, i) in tasks" :key="i" :class="t.cls">
            <button :class="{ bare: !t.label }" :aria-label="t.label ? undefined : t.icon">
              <svg viewBox="0 0 16 16" width="16" height="16" v-html="icons[t.icon]" /><span v-if="t.label">{{ t.label }}</span>
            </button>
          </li>
        </ul>
        <div class="tray">
          <button class="more" aria-label="Show hidden icons"><svg viewBox="0 0 5 8" width="5" height="8"><path d="M5 0v8L0 4z" fill="#fff" /></svg></button>
          <div class="tray-icons">
            <svg v-for="k in ['flag', 'network', 'volume', 'dropErr']" :key="k" viewBox="0 0 16 16" width="16" height="16" v-html="icons[k]" />
          </div>
          <p class="clock"><span>10:39</span><span>lørdag</span><span>04.10.2014</span></p>
          <button class="peek" aria-label="Show desktop" />
        </div>
      </nav>

      <section class="window" :class="{ glass: page.glass }">
        <header class="strip">
          <div v-if="page.glass" class="haze" aria-hidden="true"><b /><i /><i /><i /><i /><i /></div>
          <ul class="tabs">
            <li v-for="(t, i) in page.tabs" :key="i" class="tab" :class="{ active: t.active }">
              <svg v-if="t.icon" viewBox="0 0 16 16" width="16" height="16" v-html="icons[t.icon]" />
              <span class="tab-title">{{ t.title }}</span>
              <button class="tab-close" aria-label="Close tab"><svg viewBox="0 0 8 8" width="8" height="8"><path d="M1 1l6 6M7 1L1 7" stroke="#555" stroke-width="2" /></svg></button>
            </li>
          </ul>
          <button class="new-tab" aria-label="New tab" />
          <div class="controls">
            <button aria-label="Minimize"><svg viewBox="0 0 14 14" width="14" height="14"><rect x="2" y="7" width="10" height="4" fill="#fff" stroke="#445" /></svg></button>
            <button aria-label="Restore"><svg viewBox="0 0 14 14" width="14" height="14"><path d="M5 1h8v9h-2M2 4h8v9H2zM5 7h2v3H5z" fill="#fff" stroke="#445" /></svg></button>
            <button class="close" aria-label="Close"><svg viewBox="0 0 14 14" width="14" height="14"><path d="M3 2l8 9M11 2l-8 9" stroke="#445" stroke-width="4" /><path d="M3 2l8 9M11 2l-8 9" stroke="#fff" stroke-width="2.400" /></svg></button>
          </div>
        </header>

        <div class="toolbar">
          <button v-for="k in ['back', 'forward', 'reload', 'home']" :key="k" class="tool" :aria-label="k"><svg viewBox="0 0 16 16" width="16" height="16" v-html="icons[k]" /></button>
          <div class="omnibox">
            <svg viewBox="0 0 16 16" width="16" height="16" v-html="icons.page" />
            <span class="url"><b>{{ page.host }}</b>{{ page.path }}</span>
            <svg viewBox="0 0 16 16" width="18" height="18" v-html="icons.star" />
          </div>
          <button v-for="k in ['note', 'abp', 'ghost', 'bars']" :key="k" class="ext" :aria-label="k"><svg viewBox="0 0 17 16" width="18" height="18" v-html="icons[k]" /></button>
        </div>

        <div class="page">
          <nav class="navbar">
            <a class="brand" href="#">LibreNMS</a>
            <a v-for="m in menu" :key="m.label" class="nav-item" href="#">
              <svg v-if="m.icon" viewBox="0 0 16 16" width="16" height="16" v-html="icons[m.icon]" /><span>{{ m.label }}</span><i class="caret" />
            </a>
            <input class="search" type="text" placeholder="Global Search" aria-label="Global Search">
          </nav>

          <div class="well heading">
            <p><a class="host" href="#">skigw.pp23.polarparty.no</a> :: Port <a class="port" href="#">{{ page.port }}</a> :: Bits</p>
            <select class="kind" aria-label="Graph type"><option>Bits</option></select>
          </div>

          <div class="well">
            <div class="thumbs">
              <a v-for="t in page.thumbs" :key="t.title" class="thumb" href="#">
                <span>{{ t.title }}</span>
                <svg viewBox="0 0 183 180" width="112" height="60" preserveAspectRatio="none" shape-rendering="crispEdges">
                  <polygon :points="t.peak" class="f-peak" /><polygon :points="t.avg" class="f-in" />
                  <polygon :points="t.outPeak" class="f-outpeak" /><polygon :points="t.out" class="f-out" />
                  <rect v-for="y in t.lines" :key="y" x="0" :y="y - 1" width="183" height="3" fill="#a00" />
                </svg>
              </a>
            </div>
            <form class="range" @submit.prevent>
              <label :for="page.id + '-from'">From:</label><input :id="page.id + '-from'" type="text" :value="page.from">
              <label :for="page.id + '-to'">To:</label><input :id="page.id + '-to'" type="text" :value="page.to">
              <button type="submit">Update</button>
            </form>
            <div class="links">
              <span><a href="#">Hide Legend</a> | <a href="#">Show Previous</a></span>
              <a href="#">Show RRD Command</a>
            </div>
          </div>

          <figure class="graph">
            <svg viewBox="0 470 1180 330" width="1180" height="330">
              <svg v-for="(s, i) in page.traces" :key="i" :x="s.x" y="460" :width="s.width" height="420" :viewBox="s.viewBox" preserveAspectRatio="none">
                <polygon :points="s.peak" class="f-peak" /><polygon :points="s.avg" class="f-in" />
                <polygon :points="s.out" class="f-outpeak" /><polygon :points="s.outAvg" class="f-out" />
              </svg>
              <rect v-if="page.glass" x="247" y="715" width="68" height="1" class="f-out" />
              <g class="grid" shape-rendering="crispEdges">
                <path v-for="x in hours" :key="'h' + x" :d="`M${x} 483V787`" class="g-minor" />
                <path v-for="y in page.minor" :key="'m' + y" :d="`M64 ${y}H1143`" class="g-minor" />
                <path v-for="x in sixHours" :key="'s' + x" :d="`M${x} 483V788`" class="g-major" />
                <path v-for="t in page.ticks" :key="t.label" :d="`M64 ${t.y}H1143`" class="g-major" />
              </g>
              <rect x="66" :y="page.percentile" width="1074" height="1" fill="#a00" />
              <path d="M66 482V788M62 785H1143" stroke="#666" shape-rendering="crispEdges" />
              <path d="M63 483l3-5 3 5zM1142 782l5 3-5 3z" fill="#555" />
              <text v-for="t in page.ticks" :key="t.label" :x="t.lx" :y="t.y + 4" text-anchor="end">{{ t.label }}</text>
              <text v-for="d in dates" :key="d.label" :x="d.x" y="797" text-anchor="middle">{{ d.label }}</text>
              <text class="mark" transform="translate(1160 476) rotate(90)">RRDTOOL / TOBI OETIKER</text>
            </svg>
            <figcaption class="legend">
              <table>
                <thead><tr><th>bps</th><th>Now</th><th>Ave</th><th>Max</th><th>95th %</th></tr></thead>
                <tbody>
                  <tr v-for="r in page.rows" :key="r.name">
                    <th scope="row"><i :class="r.cls" />{{ r.name }}</th><td v-for="(c, i) in r.cells" :key="i">{{ c }}</td>
                  </tr>
                </tbody>
              </table>
              <p class="total"><span>Total</span><b>{{ page.total }}</b><span>(In</span><b>{{ page.totalIn }}</b><span>Out</span><b>{{ page.totalOut }}</b></p>
            </figcaption>
          </figure>

          <footer class="credits">
            <p>Powered by <a href="#">LibreNMS 2014.master</a>.</p>
            <p>LibreNMS is <a href="#">Free Software</a>, released under the <a href="#">GNU GPLv3</a>.</p>
            <p>Copyright © 2013-2014 by the LibreNMS Contributors.</p>
            <p>Copyright © 2006-2012 by Adam Armstrong.</p>
          </footer>
        </div>

        <div v-if="page.downloads" class="downloads">
          <button class="file"><svg viewBox="0 0 16 16" width="18" height="18" v-html="icons.picture" /><span>net pp23 fredag 1800.png</span><i class="caret" /></button>
          <svg viewBox="0 0 16 16" width="14" height="14" v-html="icons.download" />
          <a href="#">Vis alle nedlastinger</a>
          <button class="dismiss" aria-label="Close"><svg viewBox="0 0 8 8" width="9" height="9"><path d="M1 1l6 6M7 1L1 7" stroke="#555" stroke-width="1.600" /></svg></button>
        </div>
      </section>
    </template>
  </div>
</template>

<style>
body { background: #fff; }
</style>

<style scoped>
* { box-sizing: border-box; }
p, ul, figure { margin: 0; padding: 0; list-style: none; }
button { border: 0; padding: 0; background: none; font: inherit; color: inherit; }
svg { flex: none; display: block; }
a { color: #428bca; text-decoration: none; }

.desktop { display: grid; grid-template-columns: minmax(0, 1817fr) 103px minmax(0, 1920fr); min-height: 100vh; font-family: "DejaVu Sans", sans-serif; font-size: 13px; line-height: 20px; color: #555; }
.window { display: flex; flex-direction: column; background: #fff; min-width: 0; }

.strip { position: relative; display: flex; height: 25px; padding-left: 3px; background: linear-gradient(#3a4a5c, #56677a 40%, #7c8c9c); border-bottom: 1px solid #8a9098; font-family: "Open Sans", sans-serif; font-size: 12px; overflow: hidden; }
.glass .strip { background: linear-gradient(90deg, #e4fbff, #b4f4ff 15%, #c4fbff 45%, #d0fbff 80%, #e8f8ff); }
.haze { position: absolute; inset: 0; display: flex; justify-content: space-between; padding: 6px 420px 6px 230px; filter: blur(4px); }
.haze b { width: 120px; background: #7c9ce0; opacity: .6; }
.haze i { width: 110px; background: #8cd0f0; opacity: .35; }
.tabs { display: flex; }
.tab { position: relative; z-index: 0; display: flex; align-items: center; width: 118px; height: 24px; margin-top: 1px; padding: 0 3px 0 13px; color: #444; }
.tab > svg { margin-right: 4px; }
.glass .tab { width: 200px; padding-right: 12px; }
.tab::before, .tab::after { content: ""; position: absolute; z-index: -1; top: 0; bottom: 0; background: #bdc9d9; border-top: 1px solid #7e8a99; }
.tab::before { left: 4px; right: 50%; transform: skewX(-18deg); border-left: 1px solid #7e8a99; border-radius: 4px 0 0 0; }
.tab::after { left: 40%; right: -3px; transform: skewX(18deg); border-right: 1px solid #7e8a99; border-radius: 0 4px 0 0; }
.tab.active { z-index: 1; color: #000; }
.tab.active::before, .tab.active::after { background: #f8f8f8; }
.tab-title { flex: 1; white-space: nowrap; mask-image: linear-gradient(90deg, #000 70%, rgba(0, 0, 0, .3)); }
.tab.active .tab-title { mask-image: none; }
.tab-close { width: 14px; height: 14px; display: grid; place-items: center; }
.new-tab { width: 28px; height: 15px; margin: 6px 0 0 8px; background: #c6d2df; border: 1px solid #8696a6; border-radius: 4px; transform: skewX(18deg); }
.glass .new-tab { margin-left: 4px; background: #d8e4e8; border-color: #b0c4c8; position: relative; }
.controls { position: relative; display: flex; height: 18px; margin-left: auto; margin-right: 4px; border: 1px solid #b8c0c8; border-top: 0; border-radius: 0 0 5px 5px; overflow: hidden; }
.controls button { width: 28px; display: grid; place-items: center; background: linear-gradient(#8a98a8, #3e4a58 50%, #586878); border-right: 1px solid #b8c0c8; }
.controls .close { width: 47px; border: 0; background: linear-gradient(#e09080, #b83020 50%, #d85038); }
.glass .controls { border-color: #6a8088; margin-right: 3px; }
.glass .controls button { background: #dcf4fa; border-color: #8aa0a8; }
.glass .controls .close { background: #d8b8c8; }

.toolbar { display: flex; align-items: center; height: 36px; padding: 0 8px; background: linear-gradient(#fafafa, #e2e2e2); border-bottom: 1px solid #a4a4a4; }
.tool { width: 29px; height: 28px; display: grid; place-items: center; padding-right: 11px; }
.omnibox { flex: 1; min-width: 0; display: flex; align-items: center; gap: 6px; height: 28px; padding: 0 4px; background: #fff; border: 1px solid #a8a8a8; border-radius: 3px; font-family: "Open Sans", sans-serif; font-size: 15px; color: #808080; }
.url { flex: 1; overflow: hidden; white-space: nowrap; }
.url b { font-weight: 400; color: #000; }
.ext { width: 32px; height: 28px; display: grid; place-items: center; }
.ext:last-child { width: 27px; padding-left: 8px; }

.page { flex: 1; }
.navbar { display: flex; align-items: center; height: 51px; padding-left: 15px; background: #f8f8f8; border-bottom: 1px solid #e7e7e7; }
.navbar a { color: #777; }
.brand { width: 102px; font-size: 18px; }
.nav-item { display: flex; align-items: center; padding: 0 15px; }
.nav-item svg { margin-right: 4px; }
.caret { margin-left: 4px; border: 4px solid transparent; border-top-color: currentColor; border-bottom: 0; }
.search { width: 250px; height: 34px; padding: 6px 12px; border: 1px solid #ccc; border-radius: 4px; background: #fff; font: 14px "DejaVu Sans", sans-serif; color: #555; box-shadow: inset 0 1px 1px rgba(0, 0, 0, .08); }
.search::placeholder { color: #999; }

.well { margin: 20px 15px 0; padding: 19px; border: 1px solid #e3e3e3; border-radius: 4px; background: #f5f5f5; box-shadow: inset 0 1px 1px rgba(0, 0, 0, .05); }
.heading { display: flex; justify-content: space-between; align-items: center; height: 60px; margin-top: 9px; }
.host { color: #00009c; font-weight: 700; }
.port { color: #1c1c9c; }
.kind, .range input, .range button { appearance: none; border: 1px solid #c4c4c4; border-top: 2px solid #b0b0b0; background: linear-gradient(#f0f0f0, #fff 6px); color: #555; font: 13px "DejaVu Sans", sans-serif; border-radius: 0; }
.kind { width: 144px; height: 22px; padding: 0 6px; background: linear-gradient(135deg, #111 50%, transparent 50%) no-repeat right 6px center / 4px 6px, linear-gradient(225deg, #111 50%, transparent 50%) no-repeat right 10px center / 4px 6px, linear-gradient(#f0f0f0, #fff 6px); }

.thumbs { display: grid; grid-template-columns: repeat(9, minmax(0, 1fr)); height: 81px; background: #fff; }
.thumb { display: flex; flex-direction: column; align-items: center; font-size: 16px; font-weight: 700; line-height: 21px; color: #0c0c9c; }
.f-peak { fill: #aeee74; }
.f-in { fill: #91b13c; }
.f-outpeak { fill: #a0b4fa; }
.f-out { fill: #8080bc; }
.range { display: flex; align-items: center; margin: 20px 0; padding: 21px 0; border: solid #ccc; border-width: 1px 0; height: 68px; }
.range label { font-weight: 700; margin-right: 8px; }
.range input { width: 183px; height: 24px; padding: 0 2px; margin-right: 6px; }
.range button { width: 52px; height: 24px; }
.links { display: flex; justify-content: space-between; align-items: center; height: 20px; }

.graph { margin-top: 20px; }
.graph text { font: 10px "DejaVu Sans Mono", monospace; fill: #000; }
.graph .mark { font-size: 8px; fill: #aaa; }
.g-minor { stroke: rgba(140, 140, 140, .42); stroke-dasharray: 1 1; }
.g-major { stroke: rgba(240, 100, 100, .55); stroke-dasharray: 1 1; }
.legend { padding: 4px 0 0 30px; font: 12px/14px "DejaVu Sans Mono", monospace; color: #000; }
.legend table { border-collapse: collapse; table-layout: fixed; width: 301px; }
.legend th, .legend td { padding: 0; font-weight: 400; text-align: left; width: 65px; white-space: nowrap; }
.legend th:first-child { width: 36px; }
.legend thead th { padding-left: 29px; }
.legend thead th:first-child { padding-left: 1px; }
.legend td:last-child { padding-right: 5px; }
.legend thead th:last-child { width: 70px; }
.legend td { text-align: right; }
.legend i { display: inline-block; width: 9px; height: 10px; margin-right: 6px; vertical-align: -1px; border: 1px solid #555; }
.legend .in { background: #91b13c; }
.legend .out { background: #8080bc; }
.total { display: flex; padding-left: 1px; }
.total b { min-width: 55px; margin-right: 17px; font-weight: 400; text-align: right; }

.credits { padding-top: 67px; text-align: center; }

.downloads { display: flex; align-items: center; height: 44px; padding-right: 14px; background: #dfdfdf; border-top: 1px solid #c8c8c8; font: 12px "Open Sans", sans-serif; color: #222; }
.file { display: flex; align-items: center; width: 209px; height: 36px; padding-left: 12px; margin-right: auto; background: linear-gradient(#f8f8f8, #e8e8e8); border: 1px solid #b0b0b0; border-radius: 0 3px 3px 0; }
.file span { flex: 1; margin-left: 10px; text-align: left; }
.file .caret { margin-right: 3px; }
.downloads a { margin: 0 20px 0 6px; color: #222; text-decoration: underline; }

.taskbar { display: flex; flex-direction: column; align-items: stretch; background: #060b0e; border-left: 2px solid #34485a; font: 12px "Open Sans", sans-serif; color: #fff; }
.start { display: grid; place-items: center; height: 56px; margin-bottom: 6px; }
.tasks { font-size: 11px; }
.tasks li { height: 32px; }
.tasks li.joined { height: 30px; }
.tasks button { display: flex; align-items: center; gap: 4px; width: 100%; height: 29px; padding-left: 8px; border: 1px solid #70787c; border-radius: 2px; background: linear-gradient(165deg, #8c9092, #34393c 45%, #161c1f 50%, #22282b); white-space: nowrap; overflow: hidden; }
.tasks .joined button { height: 30px; border-bottom: 0; }
.tasks .bare { border-color: transparent; background: none; justify-content: center; padding: 0; }
.tasks .current button { width: 93px; border-color: #d8dcde; background: linear-gradient(165deg, #c0c4c6, #84888a 45%, #6c7072 50%, #8c9092); box-shadow: 0 0 0 1px #333; }
.tray { margin-top: auto; }
.more { display: block; margin-left: 9px; padding: 3px 0; }
.tray-icons { display: flex; justify-content: space-between; padding: 0 8px 0 7px; margin: 10px 0 5px; }
.clock { display: flex; flex-direction: column; align-items: center; line-height: 17px; margin-bottom: 1px; }
.peek { display: block; width: 100%; height: 14px; border: 1px solid #70787c; background: linear-gradient(165deg, #6c7072, #161c1f 60%); }
</style>
